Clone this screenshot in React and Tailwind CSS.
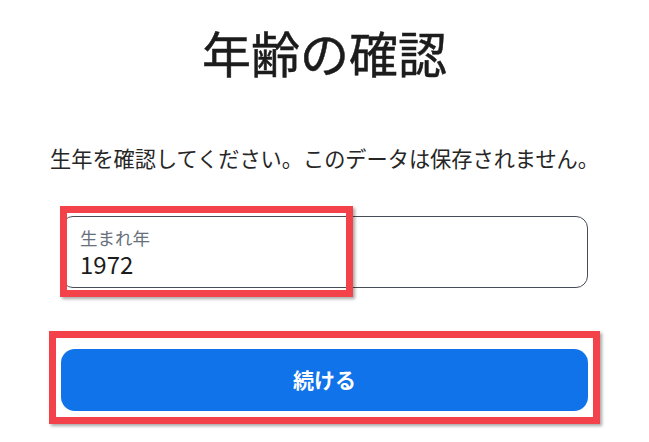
export default function App() {
  return (
    <div className="min-h-screen bg-white font-['Noto_Sans_CJK_JP','Noto_Sans',sans-serif] text-[#1c1c1c]">
      <main className="flex flex-col items-center pt-[26px]">
        <h1 className="text-[49px] leading-[52px] font-normal [-webkit-text-stroke:0.5px_#1c1c1c]">年齢の確認</h1>

        <p className="mt-[66px] text-[21.2px] leading-[28px] text-[#262626] whitespace-nowrap">
          生年を確認してください。このデータは保存されません。
        </p>

        <div className="mt-[44px] w-[527px] flex flex-col">
          <div className="relative">
            <label className="flex flex-col h-[72px] rounded-[12px] border-[1.5px] border-[#474d56] px-[18px] pt-[10px]">
              <span className="text-[17.5px] leading-[22px] text-[#68707c]">生まれ年</span>
              <input
                readOnly
                value="1972"
                className="bg-transparent outline-none text-[24px] leading-[30px] text-[#1c1c1c] font-['Noto_Sans_CJK_JP','Noto_Sans',sans-serif]"
              />
            </label>
            <div className="absolute left-[-1px] top-[-10px] w-[293px] h-[91px] border-[7px] border-[#f4424a] shadow-[2px_2px_3px_rgba(0,0,0,0.35)] pointer-events-none" />
          </div>

          <div className="relative mt-[61px]">
            <button
              type="button"
              className="w-full h-[62px] rounded-[14px] bg-[#1073ea] text-white text-[21px] font-bold"
            >
              続ける
            </button>
            <div className="absolute left-[-12px] right-[-12px] top-[-18px] bottom-[-13px] border-[7px] border-[#f4424a] shadow-[2px_2px_3px_rgba(0,0,0,0.35)] pointer-events-none" />
          </div>
        </div>
      </main>
    </div>
  );
}
